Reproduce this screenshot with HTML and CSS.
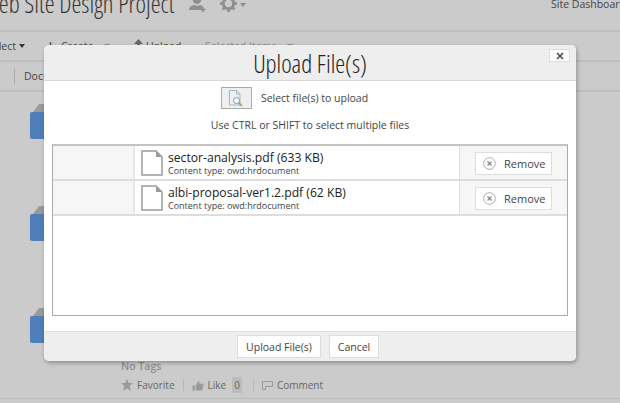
FILE: index.html
```html
<!DOCTYPE html>
<html lang="en">
<head>
    <meta charset="UTF-8">
    <meta name="viewport" content="width=device-width, initial-scale=1.0">
    <title>Upload File(s)</title>
    <link rel="stylesheet" href="styles.css">
</head>
<body>
    <div class="page">
        <div class="site-header">
            <span class="site-title">Web Site Design Project</span>
            <svg class="user-icon" width="18" height="20" viewBox="0 0 18 20"><path d="M8 1c3 0 4.500 2 4.500 4.500S11 11 8 11 3.500 8 3.500 5.500 5 1 8 1zM0 17c0-3 2-4.500 5-5l3 1 3-1c1.500.3 2.500.8 3.300 1.500H13v3.500H0z" fill="#8f8f8f"/><path d="M14 14v5M11.500 16.500h5" stroke="#8f8f8f" stroke-width="1.600"/></svg>
            <svg class="gear-icon" width="17" height="17" viewBox="0 0 17 17"><circle cx="8.500" cy="8.500" r="5.200" fill="none" stroke="#8f8f8f" stroke-width="3"/><path d="M8.500 0v3M8.500 14v3M0 8.500h3M14 8.500h3M2.500 2.500l2 2M12.500 12.500l2 2M2.500 14.500l2-2M12.500 4.500l2-2" stroke="#8f8f8f" stroke-width="2.600"/></svg>
            <span class="caret gear-caret"></span>
            <span class="site-link">Site Dashboard</span>
        </div>
        <div class="toolbar">
            <span class="tool tool-select">Select<span class="caret dark"></span></span>
            <span class="tool tool-create">
                <svg class="plus-mark" width="9" height="9" viewBox="0 0 9 9"><path d="M4.500 0v9M0 4.500h9" stroke="#555" stroke-width="1.500"/></svg>
                Create<span class="caret"></span>
            </span>
            <span class="tool tool-upload">
                <svg class="arrow-mark" width="9" height="12" viewBox="0 0 9 12"><path d="M4.500 0L9 5H6v7H3V5H0z" fill="#666"/></svg>
                Upload
            </span>
            <span class="tool tool-selected">Selected Items<span class="caret"></span></span>
        </div>
        <div class="tabs">
            <span class="tab-sep"></span>
            <span class="tab">Documents</span>
        </div>
        <div class="doc-row">
            <svg class="folder" width="30" height="36" viewBox="0 0 30 36"><path d="M3 9L9 1h21v10H3z" fill="#9a9a9a"/><path d="M2 9h28v27H2a2 2 0 0 1-2-2V11a2 2 0 0 1 2-2z" fill="#4f7fbb"/></svg>
        </div>
        <div class="doc-row">
            <svg class="folder" width="30" height="36" viewBox="0 0 30 36"><path d="M3 9L9 1h21v10H3z" fill="#9a9a9a"/><path d="M2 9h28v27H2a2 2 0 0 1-2-2V11a2 2 0 0 1 2-2z" fill="#4f7fbb"/></svg>
        </div>
        <div class="doc-row last">
            <svg class="folder" width="30" height="36" viewBox="0 0 30 36"><path d="M3 9L9 1h21v10H3z" fill="#9a9a9a"/><path d="M2 9h28v27H2a2 2 0 0 1-2-2V11a2 2 0 0 1 2-2z" fill="#4f7fbb"/></svg>
            <div class="doc-meta">
                <div class="tags">No Tags</div>
                <div class="actions">
                    <svg width="12" height="12" viewBox="0 0 12 12"><path d="M6 0l1.800 4H12L8.700 7l1.100 5L6 9.300 2.200 12l1.100-5L0 4h4.200z" fill="#9a9a9a"/></svg>
                    <span>Favorite</span>
                    <span class="action-sep"></span>
                    <svg width="12" height="11" viewBox="0 0 12 12"><path d="M0 6h2.500v5.500H0zM3.500 6L6.500 1c1.200 0 1.500 1 1 3H12v2l-1.500 5.500h-7z" fill="#9a9a9a"/></svg>
                    <span>Like</span>
                    <span class="like-count">0</span>
                    <span class="action-sep"></span>
                    <svg width="11" height="9" viewBox="0 0 11 9"><path d="M.5.500h10v5h-7v3h-3z" fill="none" stroke="#9a9a9a"/></svg>
                    <span>Comment</span>
                </div>
            </div>
        </div>
    </div>

    <div class="dialog">
        <div class="dialog-head">
            <h1>Upload File(s)</h1>
            <button class="close-btn">
                <svg width="8" height="8" viewBox="0 0 8 8"><path d="M1 1l6 6M7 1L1 7" stroke="#444" stroke-width="1.500"/></svg>
            </button>
        </div>
        <div class="dialog-body">
            <div class="picker">
                <button class="browse-btn">
                    <svg width="16" height="17" viewBox="0 0 16 17"><path d="M1.500.500h7l3.500 3.500v11h-10.500z" fill="#eef2f6" stroke="#a9b4c0"/><path d="M8.500.500V4H12" fill="none" stroke="#a9b4c0"/><circle cx="8.500" cy="10.500" r="3" fill="#fff" stroke="#7f93a8"/><path d="M11 13l3 3" stroke="#b8902c" stroke-width="1.600"/></svg>
                </button>
                <span>Select file(s) to upload</span>
            </div>
            <p class="hint">Use CTRL or SHIFT to select multiple files</p>
            <div class="file-list">
                <div class="file-row">
                    <div class="file-blank"></div>
                    <div class="file-main">
                        <svg class="file-icon" width="22" height="26" viewBox="0 0 22 26"><path d="M1 1h14l6 6v18H1z" fill="#fff" stroke="#9b9b9b" stroke-width="1.500"/><path d="M15 1l6 6h-6z" fill="#9b9b9b"/></svg>
                        <div>
                            <div class="file-name">sector-analysis.pdf (633 KB)</div>
                            <div class="file-type">Content type: owd:hrdocument</div>
                        </div>
                    </div>
                    <div class="file-action">
                        <button class="remove-btn">
                            <svg width="13" height="13" viewBox="0 0 13 13"><circle cx="6.500" cy="6.500" r="5.800" fill="#fff" stroke="#aaa"/><path d="M4.500 4.500l4 4M8.500 4.500l-4 4" stroke="#888" stroke-width="1.300"/></svg>
                            Remove
                        </button>
                    </div>
                </div>
                <div class="file-row">
                    <div class="file-blank"></div>
                    <div class="file-main">
                        <svg class="file-icon" width="22" height="26" viewBox="0 0 22 26"><path d="M1 1h14l6 6v18H1z" fill="#fff" stroke="#9b9b9b" stroke-width="1.500"/><path d="M15 1l6 6h-6z" fill="#9b9b9b"/></svg>
                        <div>
                            <div class="file-name">albi-proposal-ver1.2.pdf (62 KB)</div>
                            <div class="file-type">Content type: owd:hrdocument</div>
                        </div>
                    </div>
                    <div class="file-action">
                        <button class="remove-btn">
                            <svg width="13" height="13" viewBox="0 0 13 13"><circle cx="6.500" cy="6.500" r="5.800" fill="#fff" stroke="#aaa"/><path d="M4.500 4.500l4 4M8.500 4.500l-4 4" stroke="#888" stroke-width="1.300"/></svg>
                            Remove
                        </button>
                    </div>
                </div>
            </div>
        </div>
        <div class="dialog-foot">
            <button class="foot-btn upload-btn">Upload File(s)</button>
            <button class="foot-btn cancel-btn">Cancel</button>
        </div>
    </div>
</body>
</html>
```

FILE: styles.css
```css
html, body {
    margin: 0;
    padding: 0;
    height: 403px;
    overflow: hidden;
    background-color: #cbcbcb;
}
body {
    font-family: "Open Sans", sans-serif;
    font-size: 10.500px;
    color: #333;
}
button {
    font-family: inherit;
    cursor: pointer;
}
.page {
    width: 620px;
    height: 403px;
    overflow: hidden;
}
.site-header {
    display: flex;
    align-items: flex-start;
    height: 30px;
    border-bottom: 2px solid #bdbdbd;
    white-space: nowrap;
}
.site-title {
    flex: none;
    font-size: 25px;
    font-weight: 300;
    font-stretch: 75%;
    line-height: 26px;
    margin-left: -18px;
    margin-top: -10px;
    width: 190px;
    color: #333;
}
.user-icon {
    margin-left: 17px;
    margin-top: -7px;
}
.gear-icon {
    margin-left: 13px;
    margin-top: -5px;
}
.caret {
    display: inline-block;
    width: 0;
    height: 0;
    border-left: 3.500px solid transparent;
    border-right: 3.500px solid transparent;
    border-top: 4px solid #8f8f8f;
    vertical-align: middle;
    margin-left: 11px;
}
.caret.dark {
    border-top-color: #333;
    margin-left: 3px;
}
.gear-caret {
    margin-left: 3px;
    margin-top: 3px;
}
.site-link {
    margin-left: auto;
    margin-right: -16px;
    line-height: 14px;
    margin-top: -3px;
    color: #444;
    width: 85px;
}
.toolbar {
    display: flex;
    align-items: center;
    height: 28px;
    border-bottom: 2px solid #bdbdbd;
    white-space: nowrap;
}
.tool {
    flex: none;
    display: flex;
    align-items: center;
    color: #444;
}
.plus-mark {
    margin-right: 6px;
}
.arrow-mark {
    margin-right: 3px;
    margin-top: -2px;
}
.tool-select {
    margin-left: -13px;
    width: 59px;
}
.tool-create {
    width: 88px;
}
.tool-upload {
    width: 71px;
}
.tool-selected {
    color: #8a8a8a;
}
.tabs {
    display: flex;
    align-items: center;
    height: 28px;
    border-bottom: 2px solid #bdbdbd;
    white-space: nowrap;
}
.tab-sep {
    width: 1px;
    height: 15px;
    background-color: #aaa;
    margin-left: 14px;
}
.tab {
    margin-left: 9px;
    color: #444;
}
.doc-row {
    position: relative;
    height: 102px;
    padding-left: 30px;
    box-sizing: border-box;
}
.folder {
    display: block;
    padding-top: 11px;
}
.doc-row.last {
    height: 103px;
    border-bottom: 1px solid #bdbdbd;
}
.doc-meta {
    position: absolute;
    left: 121px;
    top: 63px;
}
.tags {
    color: #8f8f8f;
    font-weight: 600;
}
.actions {
    display: flex;
    align-items: center;
    gap: 4px;
    margin-top: 4px;
    font-size: 10px;
    color: #666;
    white-space: nowrap;
}
.action-sep {
    width: 1px;
    height: 12px;
    background-color: #b8b8b8;
    margin: 0 4px;
}
.like-count {
    background-color: #bcbcbc;
    padding: 1px 2px;
    margin-left: 2px;
    margin-right: 3px;
}
.dialog {
    position: absolute;
    left: 44px;
    top: 45px;
    width: 532px;
    height: 316px;
    display: flex;
    flex-direction: column;
    background-color: #fff;
    border-radius: 5px;
    box-shadow: 1px 2px 4px rgba(0, 0, 0, 0.3);
    overflow: hidden;
}
.dialog-head {
    position: relative;
    flex: none;
    height: 35px;
    background-color: #eee;
    border-bottom: 1px solid #d8d8d8;
}
.dialog-head h1 {
    margin: 0;
    text-align: center;
    font-size: 25px;
    font-weight: 300;
    font-stretch: 75%;
    line-height: 36px;
    color: #222;
}
.close-btn {
    position: absolute;
    right: 6px;
    top: 4px;
    width: 21px;
    height: 13px;
    padding: 0;
    display: flex;
    align-items: center;
    justify-content: center;
    background-color: #fff;
    border: 1px solid #ddd;
}
.dialog-body {
    flex: 1;
    padding: 6px 8px 0;
}
.picker {
    display: flex;
    align-items: center;
    justify-content: center;
    gap: 9px;
    padding-right: 31px;
    color: #444;
}
.browse-btn {
    width: 31px;
    height: 22px;
    padding: 0;
    display: flex;
    align-items: center;
    justify-content: center;
    background-color: #efefef;
    border: 1px solid #aaa;
}
.hint {
    margin: 9px 0 0;
    text-align: center;
    line-height: 15px;
    color: #444;
}
.file-list {
    height: 172px;
    box-sizing: border-box;
    margin-top: 11px;
    border: 1px solid #aaa;
    border-top-width: 2px;
    border-top-color: #c4c4c4;
}
.file-row {
    display: flex;
    height: 35px;
    box-sizing: border-box;
    border-bottom: 2px solid #ddd;
}
.file-blank {
    width: 80px;
    background-color: #f6f6f6;
    border-right: 2px solid #e8e8e8;
}
.file-main {
    flex: 1;
    display: flex;
    align-items: center;
    gap: 5px;
    padding-left: 6px;
}
.file-icon {
    flex: none;
}
.file-name {
    font-size: 12.150px;
    line-height: 15px;
    color: #222;
}
.file-type {
    font-size: 9px;
    line-height: 11px;
    color: #444;
}
.file-action {
    width: 108px;
    display: flex;
    align-items: center;
    padding: 2px 0 0 15px;
    box-sizing: border-box;
    background-color: #f6f6f6;
    border-left: 1px solid #ddd;
}
.remove-btn {
    width: 77px;
    height: 23px;
    padding: 0 0 0 7px;
    display: flex;
    align-items: center;
    gap: 8px;
    font-size: 11px;
    color: #444;
    background-color: #fff;
    border: 1px solid #ddd;
}
.dialog-foot {
    flex: none;
    height: 30px;
    box-sizing: border-box;
    display: flex;
    align-items: center;
    justify-content: center;
    gap: 8px;
    padding-right: 4px;
    background-color: #eee;
    border-top: 1px solid #ddd;
}
.foot-btn {
    height: 23px;
    padding: 0;
    font-size: 10.500px;
    color: #444;
    background-color: #fff;
    border: 1px solid #ddd;
}
.upload-btn {
    width: 84px;
}
.cancel-btn {
    width: 50px;
}
```
